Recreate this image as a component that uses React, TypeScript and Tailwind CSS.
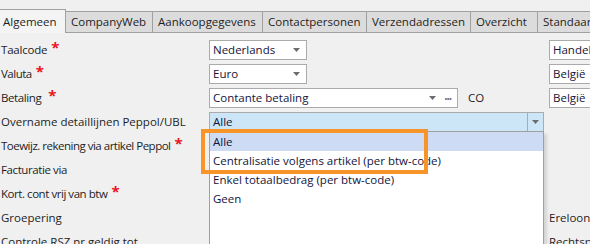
import { ReactNode } from "react";

const tabs = [
  { label: "Algemeen", w: "w-[66px]" },
  { label: "CompanyWeb", w: "w-[87px]" },
  { label: "Aankoopgegevens", w: "w-[110px]" },
  { label: "Contactpersonen", w: "w-[104px]" },
  { label: "Verzendadressen", w: "w-[104px]" },
  { label: "Overzicht", w: "w-[67px]" },
  { label: "Standaardwaarden", w: "w-[110px]" },
];

const labels: { text: string; req?: boolean; gap?: boolean; track: string }[] = [
  { text: "Taalcode", req: true, track: "tracking-[-0.2px]" },
  { text: "Valuta", req: true, track: "tracking-[-0.5px]" },
  { text: "Betaling", req: true, gap: true, track: "tracking-[-0.4px]" },
  { text: "Overname detaillijnen Peppol/UBL", track: "tracking-[0px]" },
  { text: "Toewijz. rekening via artikel Peppol", req: true, track: "tracking-[-0.5px]" },
  { text: "Facturatie via", track: "tracking-[-0.4px]" },
  { text: "Kort. cont vrij van btw", req: true, track: "tracking-[-0.45px]" },
  { text: "Groepering", track: "tracking-[0px]" },
  { text: "Controle RSZ nr geldig tot", track: "tracking-[0px]" },
];

const options = [
  "Alle",
  "Centralisatie volgens artikel (per btw-code)",
  "Enkel totaalbedrag (per btw-code)",
  "Geen",
];

const Star = ({ gap }: { gap?: boolean }) => (
  <span
    className={`text-[#e8141e] font-bold text-[15px] leading-none relative -top-[3px] tracking-normal ${
      gap ? "ml-[7px]" : "ml-[4px]"
    }`}
  >
    *
  </span>
);

const Arrow = () => (
  <svg width="7" height="4" viewBox="0 0 7 4" className="shrink-0">
    <path d="M0 0h7L3.5 4z" fill="#6d6d6d" />
  </svg>
);

const Row = ({ children, className = "" }: { children?: ReactNode; className?: string }) => (
  <div className={`h-[24px] flex items-center ${className}`}>{children}</div>
);

const Box = ({ w, children }: { w: string; children?: ReactNode }) => (
  <div
    className={`${w} h-[20px] bg-white border border-[#ababab] flex items-center pl-[3px] pr-[6px] text-[#14143a]`}
  >
    {children}
  </div>
);

export default function App() {
  return (
    <div
      className="w-[590px] h-[244px] overflow-hidden bg-[#f0f0f0] text-[11.5px] text-[#1e1e1e] relative"
      style={{ fontFamily: "'Segoe UI', 'Open Sans', 'Noto Sans', sans-serif" }}
    >
      {/* Tab strip */}
      <div className="flex items-end h-[33px] pt-[9px] whitespace-nowrap">
        {tabs.map((t, i) =>
          i === 0 ? (
            <div
              key={t.label}
              className={`${t.w} shrink-0 h-[24px] bg-[#f4f4f4] border-t border-r border-[#a0a0a0] pl-[3px] flex items-center`}
            >
              {t.label}
            </div>
          ) : (
            <div
              key={t.label}
              className={`${t.w} shrink-0 h-[22px] bg-[#dcdcdc] border-t border-r border-b border-[#a0a0a0] pl-[5px] flex items-center`}
            >
              {t.label}
            </div>
          )
        )}
      </div>

      {/* Form */}
      <div className="flex pt-[5px]">
        {/* Labels */}
        <div className="w-[209px] shrink-0 pl-[1px] whitespace-nowrap">
          {labels.map((l) => (
            <Row key={l.text} className={l.track}>
              {l.text}
              {l.req && <Star gap={l.gap} />}
            </Row>
          ))}
        </div>

        {/* Middle column */}
        <div className="w-[340px] shrink-0">
          <Row>
            <Box w="w-[98px]">
              <span className="flex-1">Nederlands</span>
              <Arrow />
            </Box>
          </Row>
          <Row>
            <Box w="w-[98px]">
              <span className="flex-1">Euro</span>
              <Arrow />
            </Box>
          </Row>
          <Row>
            <Box w="w-[249px]">
              <span className="flex-1">Contante betaling</span>
              <Arrow />
              <span className="ml-[8px] text-[#6d6d6d] tracking-[-1px] font-bold leading-none -mt-[4px]">...</span>
            </Box>
            <span className="ml-[10px]">CO</span>
          </Row>
          <Row>
            <div className="relative w-[335px] h-[20px]">
              <div className="h-full bg-[#cde6f7] border border-[#ababab] flex items-center text-[#14143a]">
                <span className="flex-1 pl-[3px]">Alle</span>
                <div className="w-[16px] h-full border-l border-[#ababab] flex items-center justify-center">
                  <Arrow />
                </div>
              </div>
              {/* Dropdown list */}
              <div className="absolute left-0 top-[19px] w-[335px] h-[130px] bg-white border border-[#a0a0a0] shadow-[3px_3px_3px_rgba(0,0,0,0.12)] z-10 text-[#14143a]">
                {options.map((o, i) => (
                  <div
                    key={o}
                    className={`h-[19px] flex items-center pl-[3px] ${i === 0 ? "bg-[#cddcf4]" : ""}`}
                  >
                    {o}
                  </div>
                ))}
              </div>
              {/* Annotation */}
              <div className="absolute left-[-8px] top-[17px] w-[227px] h-[45px] border-[4px] border-[#f7952a] z-20" />
            </div>
          </Row>
        </div>

        {/* Right column */}
        <div className="flex-1 whitespace-nowrap">
          <Row>
            <Box w="w-[60px]">Handelaar</Box>
          </Row>
          <Row>
            <Box w="w-[60px]">België</Box>
          </Row>
          <Row>
            <Box w="w-[60px]">België</Box>
          </Row>
          <Row />
          <Row />
          <Row />
          <Row />
          <Row>
            Ereloon
            <Star />
          </Row>
          <Row>Rechtspersoon</Row>
        </div>
      </div>
    </div>
  );
}
